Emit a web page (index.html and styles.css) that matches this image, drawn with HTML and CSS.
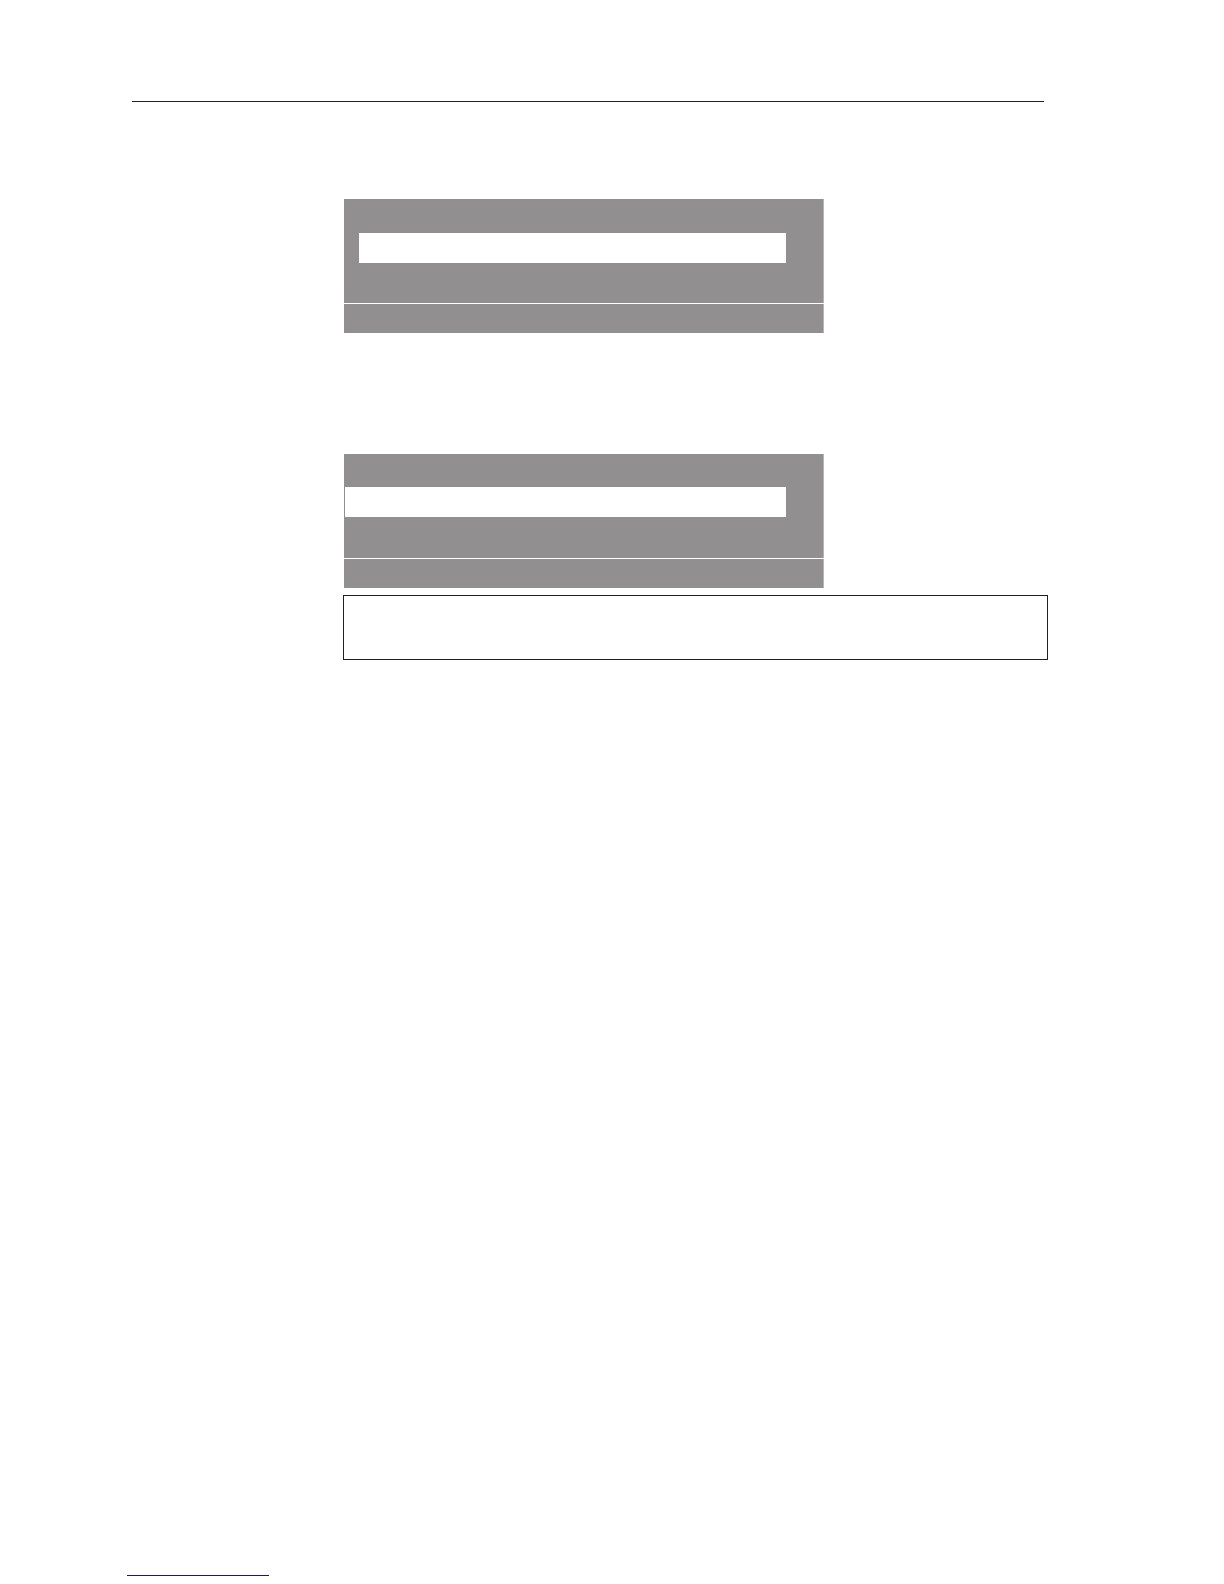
FILE: index.html
```html
<!DOCTYPE html>
<html lang="en">
<head>
    <meta charset="UTF-8">
    <meta name="viewport" content="width=device-width, initial-scale=1.0">
    <title>Display screens</title>
    <link rel="stylesheet" href="styles.css">
</head>
<body>
    <header class="page-header"></header>
    <main class="content">
        <div class="screen">
            <div class="screen-body">
                <div class="selected-row indented"></div>
            </div>
            <div class="screen-footer"></div>
        </div>
        <div class="screen">
            <div class="screen-body">
                <div class="selected-row"></div>
            </div>
            <div class="screen-footer"></div>
        </div>
        <div class="note"></div>
    </main>
    <footer class="page-footer">
        <a href="#" class="footer-link" aria-label="Back to top"></a>
    </footer>
</body>
</html>
```

FILE: styles.css
```css
* {
    box-sizing: border-box;
}
body {
    font-family: "Liberation Sans", sans-serif;
    background-color: #fff;
    display: flex;
    flex-direction: column;
    min-height: 100vh;
    margin: 0;
}
.page-header {
    height: 102px;
    margin: 0 180px 0 132px;
    border-bottom: 1px solid #231f20;
}
.content {
    margin: 97px 176px 40px 343px;
}
.screen {
    width: 480px;
    max-width: 100%;
    margin: 0 0 121px 1px;
}
.screen:nth-child(2) {
    margin-bottom: 7px;
}
.screen-body,
.screen-footer {
    background-color: #918f90;
    border-right: 1px solid #b5b3b4;
}
.screen-body {
    height: 104px;
    padding: 33px 37px 0 1px;
}
.screen-footer {
    height: 29px;
    margin-top: 1px;
}
.selected-row {
    height: 30px;
    background-color: #fff;
}
.selected-row.indented {
    margin: 1px 0 0 14px;
}
.note {
    height: 65px;
    border: 1px solid #231f20;
}
.page-footer {
    margin-top: auto;
    padding: 0 127px 8px;
}
.footer-link {
    display: block;
    width: 142px;
    height: 20px;
    border-bottom: 1px solid #14148c;
}
```
